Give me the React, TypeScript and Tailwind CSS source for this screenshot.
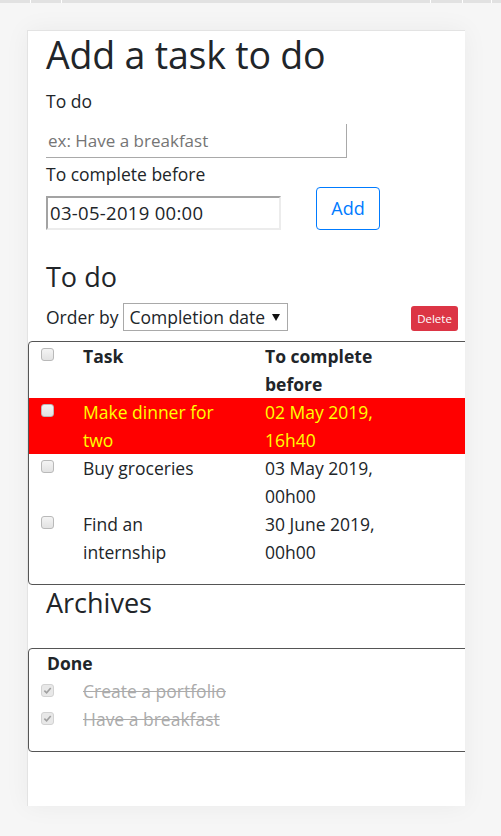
import React from "react";

function Box({ checked = false }: { checked?: boolean }) {
  return checked ? (
    <span className="flex h-[13px] w-[13px] items-center justify-center rounded-[3px] border border-[#d2d2d2] bg-[#e8e8e8]">
      <svg width="9" height="9" viewBox="0 0 10 10">
        <path d="M1.5 5.2 L4 7.6 L8.6 2.2" fill="none" stroke="#a0a0a0" strokeWidth="1.8" />
      </svg>
    </span>
  ) : (
    <span className="block h-[13px] w-[13px] rounded-[3px] border border-[#b9b9b9] bg-gradient-to-b from-[#f4f4f4] to-[#e2e2e2]" />
  );
}

type Row = { task: string[]; date: string[]; late?: boolean };

const rows: Row[] = [
  { task: ["Make dinner for", "two"], date: ["02 May 2019,", "16h40"], late: true },
  { task: ["Buy groceries"], date: ["03 May 2019,", "00h00"] },
  { task: ["Find an", "internship"], date: ["30 June 2019,", "00h00"] },
];

export default function App() {
  return (
    <div
      className="min-h-[836px] w-[501px] bg-[#f6f6f6] text-[#212529]"
      style={{ fontFamily: '"Open Sans", "Noto Sans", sans-serif' }}
    >
      <div className="flex h-[3px] gap-px bg-white">
        <div className="w-[30px] bg-[#e2e2e2]" />
        <div className="w-[30px] bg-[#e2e2e2]" />
        <div className="w-[368px] bg-[#e2e2e2]" />
        <div className="w-[31px] bg-[#e2e2e2]" />
        <div className="w-[28px] bg-[#e2e2e2]" />
        <div className="flex-1 bg-[#e2e2e2]" />
      </div>

      <div className="ml-[27px] mt-[27px] h-[776px] w-[438px] overflow-hidden border-t border-l border-[#e3e3e3] bg-white shadow-[0_0_24px_rgba(0,0,0,0.05)]">
        <div className="pl-[18px]">
          <h1 className="h-[48px] text-[37.5px] leading-[48px] font-normal tracking-[-0.2px]">Add a task to do</h1>
          <div className="mt-[10px] h-[24px] text-[17.5px] leading-[24px]">To do</div>
          <div className="mt-[11px] flex h-[34px] w-[301px] items-center border-r border-b border-[#a9a9a9] pl-[2px] text-[17px] text-[#757575]">
            ex: Have a breakfast
          </div>
          <div className="mt-[4px] h-[24px] text-[17.5px] leading-[24px]">To complete before</div>
          <div className="mt-px flex items-end">
            <div className="flex h-[34px] w-[235px] items-center border-2 border-t-[#a3a3a3] border-l-[#a3a3a3] border-b-[#ececec] border-r-[#ececec] pl-[2px] text-[18.5px] tracking-[0.3px]">
              03-05-2019 00:00
            </div>
            <div className="ml-[35px] flex h-[43px] w-[64px] items-center justify-center rounded-[4px] border border-[#007bff] text-[18px] text-[#007bff]">
              Add
            </div>
          </div>
          <h3 className="mt-[30px] h-[34px] text-[27px] leading-[34px] font-normal">To do</h3>
          <div className="mt-[9px] flex h-[28px] items-end justify-between pr-[7px]">
            <div className="flex h-[28px] items-center">
              <span className="text-[17.5px]">Order by</span>
              <div className="ml-[5px] flex h-[28px] w-[165px] items-center border border-[#a9a9a9] pl-[5px] text-[17.5px]">
                <span>Completion date</span>
                <svg className="ml-[7px]" width="8" height="7" viewBox="0 0 8 7">
                  <path d="M0 0 H8 L4 7 Z" fill="#111" />
                </svg>
              </div>
            </div>
            <div className="flex h-[25px] w-[47px] items-center justify-center rounded-[3px] bg-[#dc3545] text-[11.5px] text-white">
              Delete
            </div>
          </div>
        </div>

        <div className="mt-[10px] h-[244px] w-[442px] rounded-[4px] border border-[#555] pb-[19px] text-[17.5px] leading-[28px]">
          <div className="grid h-[56px] grid-cols-[54px_182px_1fr]">
            <div className="pt-[6px] pl-[12px]">
              <Box />
            </div>
            <div className="font-bold">Task</div>
            <div className="font-bold">
              To complete
              <br />
              before
            </div>
          </div>
          {rows.map((r, i) => (
            <div
              key={i}
              className={
                r.late
                  ? "grid h-[56px] grid-cols-[54px_182px_1fr] bg-[#ff0000] text-[#ffff00]"
                  : "grid h-[56px] grid-cols-[54px_182px_1fr]"
              }
            >
              <div className="pt-[6px] pl-[12px]">
                <Box />
              </div>
              <div>
                {r.task.map((t, j) => (
                  <div key={j}>{t}</div>
                ))}
              </div>
              <div>
                {r.date.map((t, j) => (
                  <div key={j}>{t}</div>
                ))}
              </div>
            </div>
          ))}
        </div>

        <h3 className="mt-[1px] h-[34px] pl-[18px] text-[27px] leading-[34px] font-normal">Archives</h3>

        <div className="mt-[28px] h-[104px] w-[442px] rounded-[4px] border border-[#555] text-[17.5px] leading-[28px]">
          <div className="pl-[18px] font-bold">Done</div>
          {["Create a portfolio", "Have a breakfast"].map((t) => (
            <div key={t} className="grid h-[28px] grid-cols-[54px_1fr]">
              <div className="pt-[7px] pl-[12px]">
                <Box checked />
              </div>
              <div className="text-[#ababab] line-through">{t}</div>
            </div>
          ))}
        </div>
      </div>
    </div>
  );
}
